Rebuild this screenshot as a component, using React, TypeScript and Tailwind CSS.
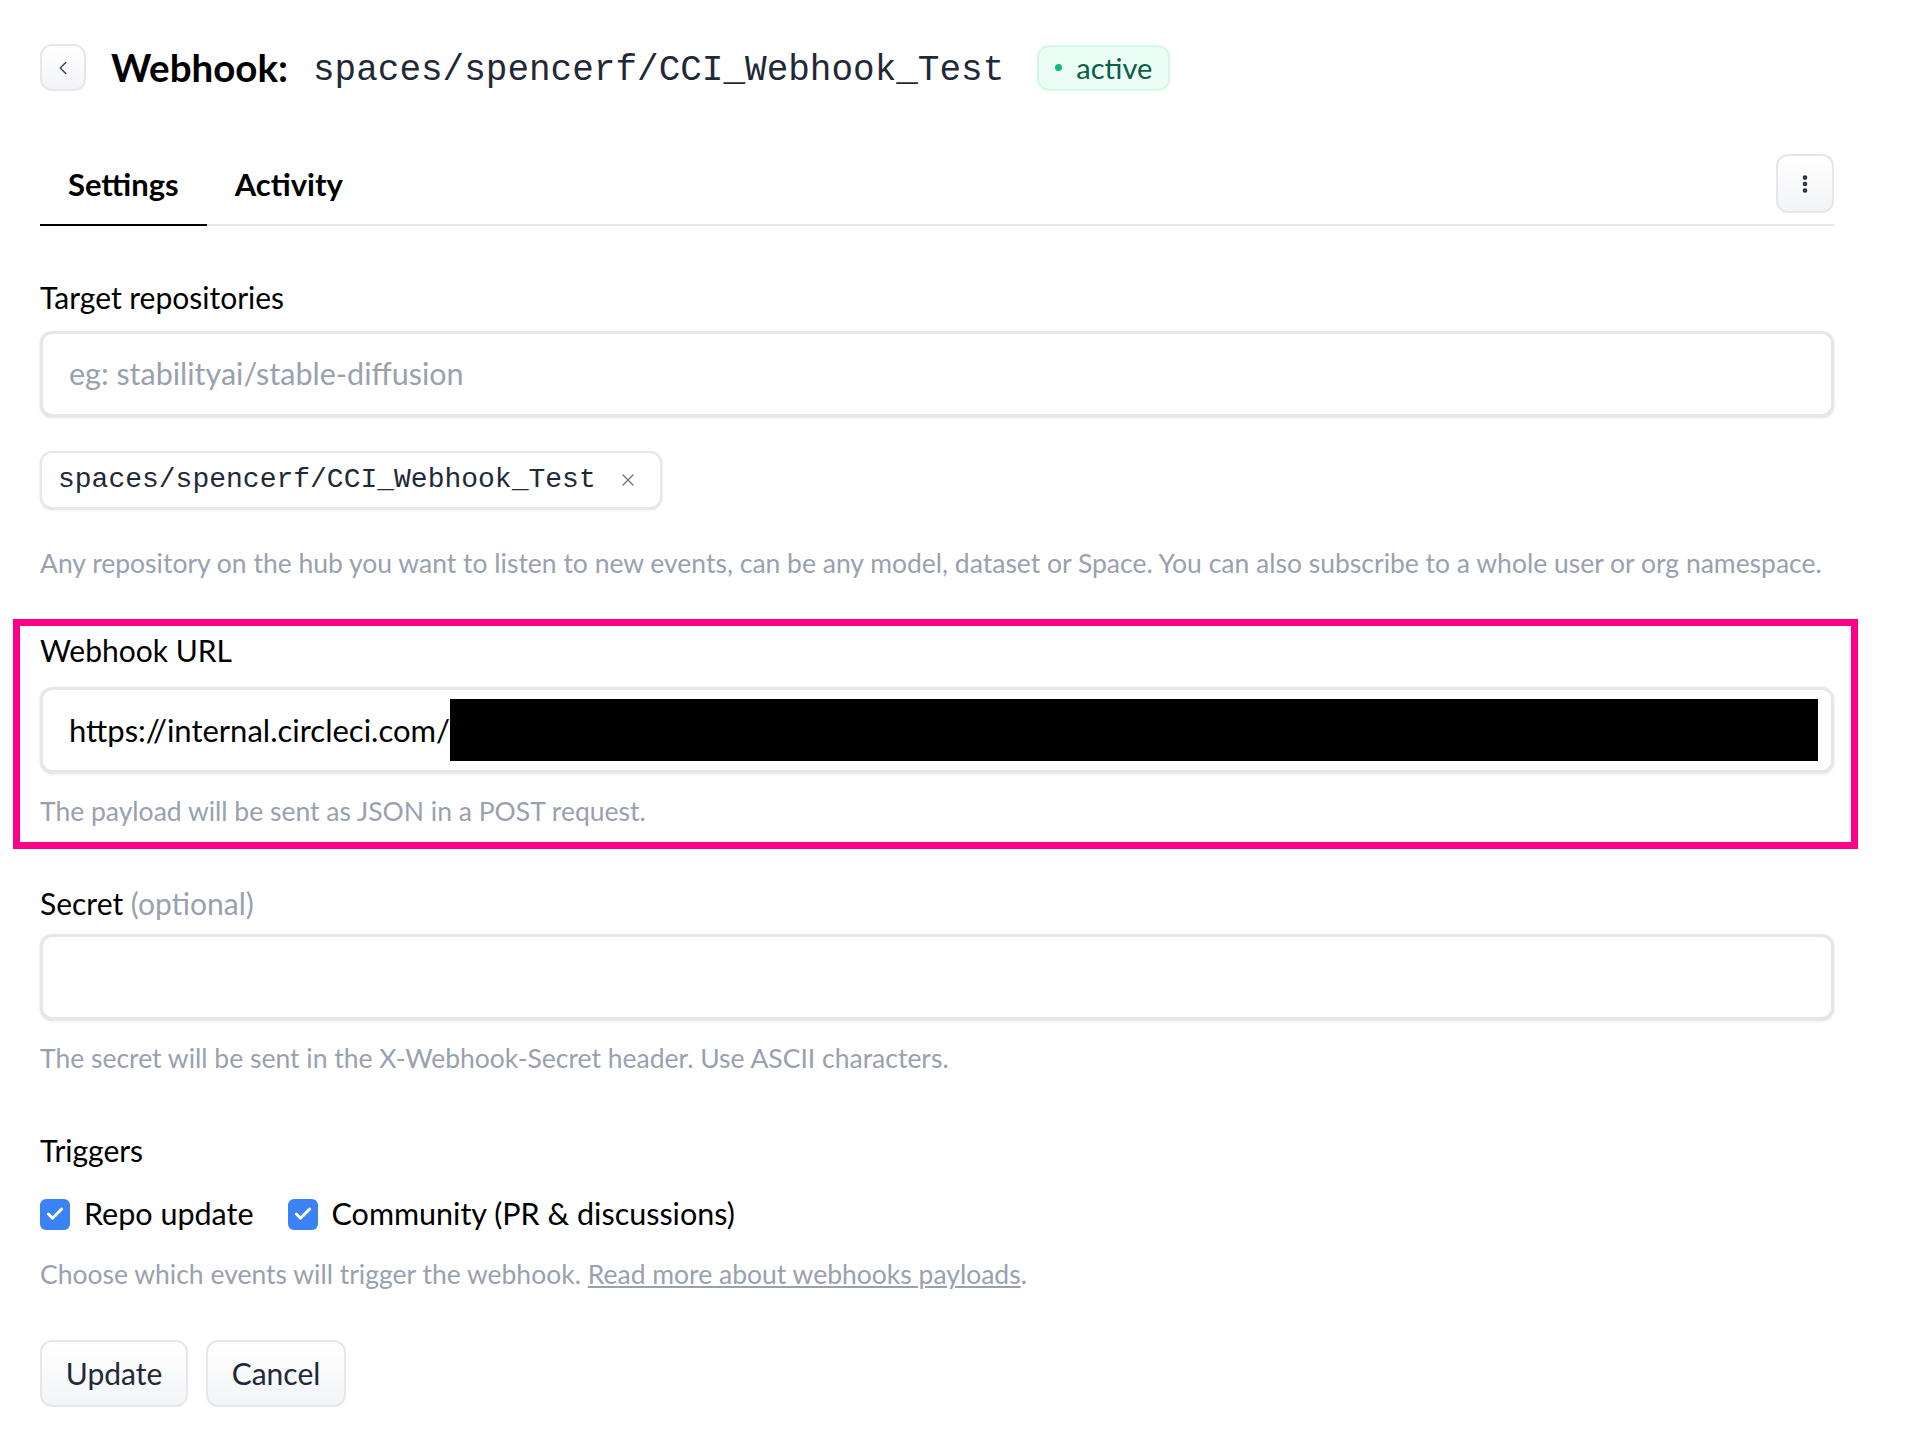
import { ChevronLeft, EllipsisVertical, X, Check } from "lucide-react";

const btn =
  "border-2 border-gray-200 bg-gradient-to-b from-white to-gray-100 rounded-xl";

function Field({ children, pr = "pr-[26px]" }: { children?: React.ReactNode; pr?: string }) {
  return (
    <div className={`flex h-[86px] items-center rounded-xl border-[3px] border-gray-200 bg-white pl-[26px] shadow-sm ${pr}`}>
      {children}
    </div>
  );
}

function Box() {
  return (
    <span className="flex h-[31px] w-[30px] items-center justify-center rounded-md bg-[#3b82f6]">
      <Check className="h-[20px] w-[20px] text-white" strokeWidth={3.5} />
    </span>
  );
}

export default function App() {
  return (
    <div className="min-h-screen bg-white font-['Lato',sans-serif] text-black">
      <div className="w-[1834px] pl-10 pt-[44px] pb-10">
        {/* header */}
        <div className="flex h-[47px] items-center">
          <button className={`flex h-[47px] w-[46px] items-center justify-center ${btn}`}>
            <ChevronLeft className="h-[22px] w-[22px] text-gray-700" strokeWidth={1.5} />
          </button>
          <h1 className="ml-[25px] text-[38.5px] font-bold leading-none">Webhook:</h1>
          <span className="ml-[25px] pt-[6px] font-['Liberation_Mono',monospace] text-[36px] leading-none text-[#1f2937]">
            spaces/spencerf/CCI_Webhook_Test
          </span>
          <span className="ml-[33px] flex h-[46px] items-center rounded-xl border-2 border-[#d1fae5] bg-[#ecfdf5] px-[16px] text-[29px] text-[#065f46]">
            <span className="mr-[14px] h-[7px] w-[7px] rounded-full bg-[#10b981]" />
            active
          </span>
        </div>

        {/* tabs */}
        <div className="mt-[63px] flex items-start justify-between border-b-2 border-gray-200">
          <div className="flex">
            <div className="-mb-[2px] flex h-[72px] items-center border-b-2 border-black px-[28px] pb-[10px] text-[31px] font-bold">
              Settings
            </div>
            <div className="flex h-[70px] items-center px-[28px] pb-[10px] text-[31px] font-bold">
              Activity
            </div>
          </div>
          <button className={`flex h-[59px] w-[58px] items-center justify-center ${btn}`}>
            <EllipsisVertical className="h-[22px] w-[22px] text-[#1f2937]" strokeWidth={3} />
          </button>
        </div>

        {/* target repositories */}
        <div className="mt-[53px] text-[30px] leading-[36px]">Target repositories</div>
        <div className="mt-[16px]">
          <Field>
            <span className="text-[30.5px] text-gray-400">eg: stabilityai/stable-diffusion</span>
          </Field>
        </div>
        <div className="mt-[34px] flex">
          <span className="flex h-[58px] items-center gap-[22px] rounded-xl border-2 border-gray-200 bg-white pl-[16px] pr-[22px] shadow-sm">
            <span className="font-['Liberation_Mono',monospace] text-[28px] text-[#1f2937]">
              spaces/spencerf/CCI_Webhook_Test
            </span>
            <X className="h-[20px] w-[20px] text-gray-500" strokeWidth={1.5} />
          </span>
        </div>
        <p className="mt-[37px] text-[26.5px] leading-[34px] text-gray-400">
          Any repository on the hub you want to listen to new events, can be any model, dataset or Space. You can also
          subscribe to a whole user or org namespace.
        </p>

        {/* webhook url (highlighted) */}
        <div className="mt-[39px] ml-[-27px] mr-[-24px] border-[7px] border-[#ff0088] pl-[20px] pr-[17px] pt-[6px] pb-[14px]">
          <div className="text-[30px] leading-[36px]">Webhook URL</div>
          <div className="mt-[19px]">
            <Field pr="pr-[13px]">
              <span className="text-[31px] text-black">https://internal.circleci.com/</span>
              <span className="h-[62px] flex-1 bg-black" />
            </Field>
          </div>
          <p className="mt-[21px] text-[26.5px] leading-[34px] text-gray-400">
            The payload will be sent as JSON in a POST request.
          </p>
        </div>

        {/* secret */}
        <div className="mt-[36px] text-[30px] leading-[36px]">
          Secret <span className="text-gray-400">(optional)</span>
        </div>
        <div className="mt-[13px]">
          <Field />
        </div>
        <p className="mt-[21px] text-[26.5px] leading-[34px] text-gray-400">
          The secret will be sent in the X-Webhook-Secret header. Use ASCII characters.
        </p>

        {/* triggers */}
        <div className="mt-[57px] text-[30px] leading-[36px]">Triggers</div>
        <div className="mt-[28px] flex h-[36px] items-center text-[30.5px]">
          <label className="flex items-center gap-[14px]">
            <Box />
            Repo update
          </label>
          <label className="ml-[34px] flex items-center gap-[14px]">
            <Box />
            Community (PR &amp; discussions)
          </label>
        </div>
        <p className="mt-[25px] text-[26.5px] leading-[34px] text-gray-400">
          Choose which events will trigger the webhook.{" "}
          <a href="#" className="underline">
            Read more about webhooks payloads
          </a>
          .
        </p>

        <div className="mt-[49px] flex gap-[18px]">
          <button className={`h-[67px] w-[148px] text-[30px] text-[#1f2937] ${btn}`}>Update</button>
          <button className={`h-[67px] w-[140px] text-[30px] text-[#1f2937] ${btn}`}>Cancel</button>
        </div>
      </div>
    </div>
  );
}
